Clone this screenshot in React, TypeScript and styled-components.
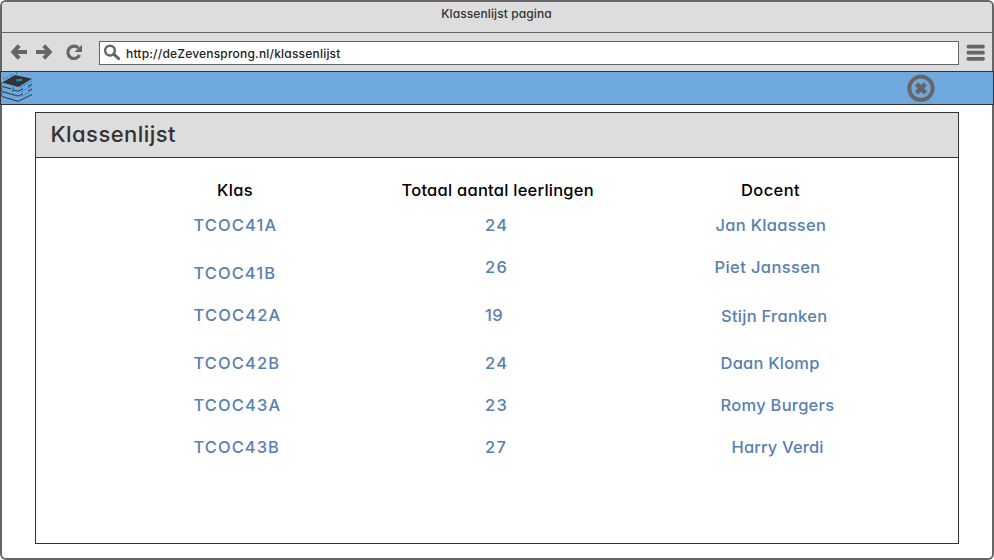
import React from 'react';
import styled, { createGlobalStyle } from 'styled-components';

const GlobalStyle = createGlobalStyle`
  * { box-sizing: border-box; }
  body { margin: 0; background: #fff; }
  #root { font-family: Inter, "Open Sans", sans-serif; font-feature-settings: 'cv11'; }
`;

const BrowserWindow = styled.div`
  width: 994px;
  height: 560px;
  display: flex;
  flex-direction: column;
  border: 2px solid #666;
  border-radius: 6px;
  background: #fff;
`;

const TitleBar = styled.div`
  height: 31px;
  flex: none;
  padding-right: 1px;
  border-bottom: 1px solid #666;
  border-radius: 4px 4px 0 0;
  background: #ddd;
  color: #333;
  text-align: center;
  font-size: 12px;
  font-weight: 500;
  line-height: 23px;
  letter-spacing: 0.1px;
`;

const Toolbar = styled.div`
  height: 38px;
  flex: none;
  display: flex;
  align-items: center;
  padding: 2px 6px 0 8px;
  background: #ddd;
`;

const NavButtons = styled.div`
  display: flex;
  flex: none;
  width: 89px;
  height: 20px;
`;

const AddressBar = styled.div`
  width: 860px;
  height: 24px;
  flex: none;
  display: flex;
  align-items: center;
  border: 1px solid #666;
  background: #fff;
  color: #222;
  font-size: 12px;
  font-weight: 500;
  line-height: 23px;
  letter-spacing: 0.2px;
`;

const SearchSlot = styled.span`
  width: 26px;
  height: 22px;
  flex: none;
`;

const MenuButton = styled.span`
  width: 20px;
  height: 20px;
  flex: none;
  margin-left: 7px;
`;

const AppBar = styled.div`
  height: 34px;
  flex: none;
  display: flex;
  align-items: center;
  justify-content: space-between;
  margin: 0 -2px;
  padding-right: 58px;
  border: 1px solid #333;
  background: #6fa8dc;
`;

const Panel = styled.section`
  width: 924px;
  height: 432px;
  margin: 7px 0 0 33px;
  border: 1px solid #333;
  background: #fff;
`;

const PanelTitle = styled.h1`
  height: 45px;
  margin: 0;
  padding-left: 14.5px;
  border-bottom: 1px solid #333;
  background: #ddd;
  color: #333;
  font-size: 22px;
  font-weight: 500;
  line-height: 42px;
  letter-spacing: 0.45px;
`;

const Columns = styled.div`
  display: flex;
  padding: 22px 0 0 157.5px;
`;

const Column = styled.div<{ $width: number }>`
  width: ${p => p.$width}px;
  display: flex;
  flex-direction: column;
`;

const Cell = styled.div<{ $gap: number; $indent?: number; $spacing: number }>`
  margin-top: ${p => p.$gap}px;
  margin-left: ${p => p.$indent ?? 0}px;
  color: #5880b1;
  font-size: 16.5px;
  font-weight: 500;
  line-height: 20px;
  letter-spacing: ${p => p.$spacing}px;
  white-space: nowrap;
`;

const HeaderCell = styled(Cell)`
  color: #000;
`;

interface Entry { text: string; gap: number; indent?: number; spacing: number }
interface ColumnData { width: number; header: Entry; entries: Entry[] }

const columns: ColumnData[] = [
  {
    width: 291.5,
    header: { text: 'Klas', gap: 0, indent: 23.5, spacing: 0.35 },
    entries: [
      { text: 'TCOC41A', gap: 15, spacing: 1.1 },
      { text: 'TCOC41B', gap: 28, spacing: 1.05 },
      { text: 'TCOC42A', gap: 22, spacing: 1.15 },
      { text: 'TCOC42B', gap: 28, spacing: 1.1 },
      { text: 'TCOC43A', gap: 22, spacing: 1.1 },
      { text: 'TCOC43B', gap: 22, spacing: 1.05 },
    ],
  },
  {
    width: 229,
    header: { text: 'Totaal aantal leerlingen', gap: 0, indent: -83.5, spacing: 0.24 },
    entries: [
      { text: '24', gap: 15, spacing: 1.3 },
      { text: '26', gap: 22, spacing: 1.3 },
      { text: '19', gap: 28, spacing: 0.5 },
      { text: '24', gap: 28, spacing: 1.3 },
      { text: '23', gap: 22, spacing: 1.3 },
      { text: '27', gap: 22, spacing: 1.3 },
    ],
  },
  {
    width: 200,
    header: { text: 'Docent', gap: 0, indent: 27, spacing: 0.4 },
    entries: [
      { text: 'Jan Klaassen', gap: 15, indent: 1.5, spacing: 0.28 },
      { text: 'Piet Janssen', gap: 22, indent: 0.6, spacing: 0.38 },
      { text: 'Stijn Franken', gap: 29, indent: 7, spacing: 0.27 },
      { text: 'Daan Klomp', gap: 27, indent: 6.6, spacing: 0.2 },
      { text: 'Romy Burgers', gap: 22, indent: 6.6, spacing: 0.25 },
      { text: 'Harry Verdi', gap: 22, indent: 17.6, spacing: 0.14 },
    ],
  },
];

const NavIcons = () => (
  <svg width="80" height="20" viewBox="0 0.5 80 20" fill="none" stroke="#666">
    <path d="M9.2 3.2 3.3 9.5l5.900 6.300M3.800 9.500H17" strokeWidth="4" />
    <path d="M33.800 3.200l5.900 6.300-5.900 6.300M39.200 9.500H26" strokeWidth="4" />
    <path d="M68.400 5.400A6.200 6.200 0 1 0 69.600 12.500" strokeWidth="3.200" />
    <path d="M72 2.200v7.300h-7.300z" fill="#666" stroke="none" />
  </svg>
);

const SearchIcon = () => (
  <svg width="26" height="22" viewBox="0 0 26 22" fill="none" stroke="#666">
    <circle cx="10" cy="8.600" r="4.900" strokeWidth="2.400" />
    <path d="M13.700 12.200l5 4.400" strokeWidth="3" strokeLinecap="round" />
  </svg>
);

const MenuIcon = () => (
  <svg width="20" height="20" viewBox="0 0.500 20 20" fill="#666">
    <rect x="0.700" y="2.200" width="18" height="3.800" rx="1.400" />
    <rect x="0.700" y="8.300" width="18" height="3.800" rx="1.400" />
    <rect x="0.700" y="14.400" width="18" height="3.800" rx="1.400" />
  </svg>
);

const BooksIcon = () => (
  <svg width="33" height="32" viewBox="1 72 33 32" fill="none">
    <path d="M2 82.500 15 75l17 3.800L18.500 87z" fill="#333" />
    <path d="M16 79.300l6-.6v2.200l-5.500.5z" fill="#0e8bcb" />
    <path d="M3 78.500l5-1.500M9 75.800l4-1M16.500 72v3" stroke="#0e8bcb" strokeWidth="1" strokeDasharray="2 1" />
    <path
      d="M2 82.500c-1 1-1 3 0 4l9 2.300M14 90l4 1.300 5-2.600M2 87.500c-1 1-1 3 0 4l16 4.600 5-2.600M2 92.500c-1 1-1 3 0 4l16 4.800 14-6.800M28 86.500l4-2.200M28 91l4-2"
      stroke="#333"
      strokeWidth="1"
    />
    <path d="M20 87.500l11.500-6M21 91.800l10.500-5.500M21 96.300l10.500-5.500" stroke="#1688c8" strokeWidth="1" strokeDasharray="2.500 1.200" />
    <path d="M13 87.200v4.800" stroke="#0e8bcb" strokeWidth="2" />
  </svg>
);

const CloseIcon = () => (
  <svg width="28" height="28" viewBox="0 0 28 28" fill="none" stroke="#666">
    <circle cx="14" cy="14.300" r="11.700" strokeWidth="3.900" />
    <path d="M9.500 9.800l9 9M18.500 9.800l-9 9" strokeWidth="4.600" />
  </svg>
);

export default function App() {
  return (
    <>
      <GlobalStyle />
      <BrowserWindow>
        <TitleBar>Klassenlijst pagina</TitleBar>
        <Toolbar>
          <NavButtons><NavIcons /></NavButtons>
          <AddressBar>
            <SearchSlot><SearchIcon /></SearchSlot>
            http://deZevensprong.nl/klassenlijst
          </AddressBar>
          <MenuButton><MenuIcon /></MenuButton>
        </Toolbar>
        <AppBar>
          <BooksIcon />
          <CloseIcon />
        </AppBar>
        <Panel>
          <PanelTitle>Klassenlijst</PanelTitle>
          <Columns>
            {columns.map(({ width, header, entries }) => (
              <Column key={header.text} $width={width}>
                <HeaderCell $gap={header.gap} $indent={header.indent} $spacing={header.spacing}>
                  {header.text}
                </HeaderCell>
                {entries.map(e => (
                  <Cell key={`${e.text}-${e.gap}`} $gap={e.gap} $indent={e.indent} $spacing={e.spacing}>
                    {e.text}
                  </Cell>
                ))}
              </Column>
            ))}
          </Columns>
        </Panel>
      </BrowserWindow>
    </>
  );
}
